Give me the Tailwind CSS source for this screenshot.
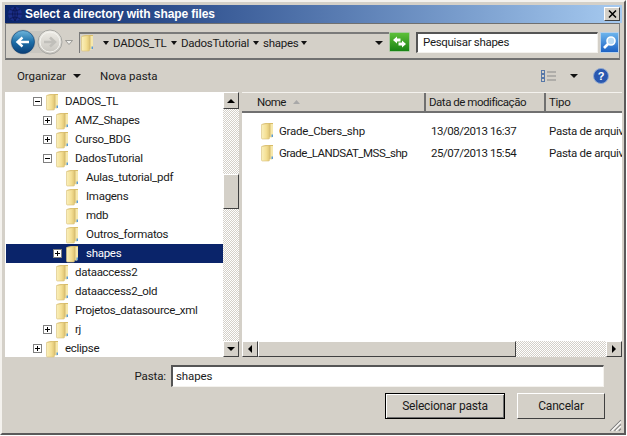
<!DOCTYPE html>
<html>
<head>
<meta charset="utf-8">
<script src="https://cdn.jsdelivr.net/npm/@tailwindcss/browser@4"></script>
</head>
<body class="m-0 bg-white">
<svg width="0" height="0" class="absolute">
  <defs>
    <linearGradient id="fg" x1="0" x2="1" y1="0" y2="0"><stop offset="0" stop-color="#faf0bc"/><stop offset="0.6" stop-color="#f4df94"/><stop offset="1" stop-color="#e0c674"/></linearGradient>
    <symbol id="folder" viewBox="0 0 13 18">
      <path d="M1 2 L5 1 L12 1 L12 15 L6 15 Z" fill="#d8bc68"/>
      <path d="M0.5 2.5 L7 1.5 Q8.5 1.5 8.5 3 L8.5 16 Q8.5 17 7.5 17 L1.5 17 Q0.5 17 0.5 16 Z" fill="url(#fg)" stroke="#d8c078" stroke-width="0.6"/>
      <path d="M9.5 2 L12 2 L12 15 L9.5 16 Z" fill="#f6e8ac"/>
      <rect x="10.5" y="12.5" width="1.5" height="2.5" fill="#5b9bd5"/>
    </symbol>
  </defs>
</svg>
<div class="w-[626px] h-[435px] overflow-hidden flex flex-col bg-[#d4d0c8] border-2 border-[#f4f2ee] border-r-[#5a5a5a] border-b-[#5a5a5a] pt-[3px] pl-[3px] pr-[2px] text-[11.5px] tracking-[-0.28px] leading-[19px] text-[#1a1a1a] font-['Roboto','Noto_Sans',sans-serif]">

  <!-- Title bar -->
  <div class="h-[18px] shrink-0 flex items-center bg-gradient-to-r from-[#0a246a] to-[#a6caf0] pl-[2px] pr-[2px]">
    <svg width="16" height="16" viewBox="0 0 16 16" class="shrink-0">
      <circle cx="8" cy="8" r="7" fill="#1c2f8a"/>
      <path d="M1 8h14M8 1v14M3 3.5q5 3 10 0M3 12.5q5-3 10 0M8 1q-5 7 0 14M8 1q5 7 0 14" stroke="#0a1550" stroke-width="0.8" fill="none"/>
    </svg>
    <span class="ml-[2px] text-white font-bold text-[12px] tracking-[-0.08px] leading-[18px] font-['Liberation_Sans',sans-serif]">Select a directory with shape files</span>
    <div class="ml-auto w-[16px] h-[14px] bg-[#d4d0c8] border border-[#fff] border-r-[#404040] border-b-[#404040] flex items-center justify-center">
      <svg width="9" height="8" viewBox="0 0 9 8"><path d="M1 0.5L8 7.5M8 0.5L1 7.5" stroke="#000" stroke-width="1.5"/></svg>
    </div>
  </div>

  <!-- Navigation bar -->
  <div class="h-[37px] w-[615px] shrink-0 flex items-center pl-[4px] pt-[2px] border border-[#808080] border-t-[#707070] border-b-2 border-b-[#707070]">
    <svg width="65" height="28" viewBox="0 0 65 28" class="shrink-0">
      <defs>
        <linearGradient id="bk" x1="0" x2="0" y1="0" y2="1"><stop offset="0" stop-color="#6fb6dc"/><stop offset="0.5" stop-color="#1c6ea8"/><stop offset="1" stop-color="#0a3f78"/></linearGradient>
        <linearGradient id="fw" x1="0" x2="0" y1="0" y2="1"><stop offset="0" stop-color="#f0eee8"/><stop offset="1" stop-color="#c4c2bc"/></linearGradient>
      </defs>
      <rect x="12" y="3" width="28" height="22" fill="#c8c6c0"/>
      <circle cx="40" cy="14" r="12" fill="url(#fw)" stroke="#a8a8a4"/>
      <circle cx="40" cy="14" r="10" fill="none" stroke="#f4f4f0"/>
      <path d="M34 14h10M40 9.5l5 4.5-5 4.5" stroke="#c0bfba" stroke-width="2.5" fill="none"/>
      <circle cx="13" cy="14" r="12.5" fill="#bcbab4"/>
      <circle cx="13" cy="14" r="11.5" fill="url(#bk)" stroke="#0d3c6e" stroke-width="0.6"/>
      <path d="M19 14H8.5M12.5 9.5L7.5 14l5 4.5" stroke="#fff" stroke-width="2.4" fill="none"/>
      <path d="M55.5 12.5h7l-3.5 4z" fill="#efefec" stroke="#8a8a86" stroke-width="0.8"/>
    </svg>
    <!-- address -->
    <div class="ml-[4px] w-[310px] h-[21px] shrink-0 flex items-center border-t-2 border-l border-[#7a7a7a] pl-[1px] whitespace-nowrap tracking-[-0.25px]">
      <svg width="13" height="18" class="shrink-0"><use href="#folder"/></svg>
      <span class="ml-[9px] w-0 h-0 border-x-[3.5px] border-x-transparent border-t-[4px] border-t-[#111] shrink-0"></span>
      <span class="ml-[4px] w-[52px] shrink-0">DADOS_TL</span>
      <span class="ml-[6px] w-0 h-0 border-x-[3.5px] border-x-transparent border-t-[4px] border-t-[#111] shrink-0"></span>
      <span class="ml-[4px] w-[67px] shrink-0">DadosTutorial</span>
      <span class="ml-[5px] w-0 h-0 border-x-[3.5px] border-x-transparent border-t-[4px] border-t-[#111] shrink-0"></span>
      <span class="ml-[4px] w-[36px] shrink-0">shapes</span>
      <span class="ml-[2px] w-0 h-0 border-x-[3.5px] border-x-transparent border-t-[4px] border-t-[#111] shrink-0"></span>
      <span class="ml-auto mr-[6px] w-0 h-0 border-x-[4px] border-x-transparent border-t-[4px] border-t-[#111] shrink-0"></span>
    </div>
    <!-- refresh -->
    <div class="w-[21px] h-[20px] shrink-0 bg-gradient-to-b from-[#5cc038] to-[#178414] border border-[#a8c8a0] rounded-[1px] flex items-center justify-center">
      <svg width="15" height="14" viewBox="0 0 15 14"><path d="M1 5L5 1.5V3.5H8.5V6.5H5V8.5zM14 9L10 12.5V10.5H6.5V7.5H10V5.5z" fill="#fff"/></svg>
    </div>
    <!-- search -->
    <div class="ml-[6px] w-[182px] h-[21px] shrink-0 bg-white border-t-2 border-l-2 border-[#555] border-r border-b border-r-[#f4f2ee] border-b-[#f4f2ee] flex items-center pl-[5px] tracking-[-0.3px]">Pesquisar shapes</div>
    <div class="ml-[2px] w-[19px] h-[21px] shrink-0 bg-gradient-to-b from-[#6cb4ec] to-[#1c62c4] border border-[#b8d0e8] flex items-center justify-center">
      <svg width="15" height="15" viewBox="0 0 15 15"><circle cx="9" cy="6" r="4" fill="#bcdcf4" stroke="#fff" stroke-width="1.6"/><path d="M6 9L2 13" stroke="#fff" stroke-width="2.6"/></svg>
    </div>
  </div>

  <!-- Command bar -->
  <div class="h-[32px] shrink-0 flex items-center pl-[12px] pr-[13px] tracking-[-0.05px]">
    <span class="w-[56px] shrink-0">Organizar</span>
    <span class="w-0 h-0 border-x-[4px] border-x-transparent border-t-[4px] border-t-[#111]"></span>
    <span class="ml-[19px]">Nova pasta</span>
    <svg width="16" height="14" viewBox="0 0 16 14" class="ml-auto">
      <g fill="none" stroke="#5878a8"><rect x="0.5" y="1.5" width="3" height="3"/><rect x="0.5" y="5.5" width="3" height="3"/><rect x="0.5" y="9.5" width="3" height="3"/></g>
      <path d="M6 3h9M6 7h9M6 11h9" stroke="#8a8a8a"/>
    </svg>
    <span class="ml-[13px] w-0 h-0 border-x-[4px] border-x-transparent border-t-[4px] border-t-[#111]"></span>
    <svg width="16" height="16" viewBox="0 0 16 16" class="ml-[15px]">
      <circle cx="8" cy="8" r="7.5" fill="#2a58b0" stroke="#8fa8d0"/>
      <text x="8" y="12" font-size="11" font-weight="700" text-anchor="middle" fill="#fff" font-family="Liberation Sans">?</text>
    </svg>
  </div>

  <!-- Panes -->
  <div class="h-[265px] shrink-0 flex">
    <!-- Tree -->
    <div class="w-[218px] shrink-0 bg-white flex flex-col pl-[1px]">
      <div class="h-[19px] flex items-center pl-[27px]"><span class="w-[9px] h-[9px] border border-[#808080] bg-white flex items-center justify-center"><span class="w-[5px] h-px bg-black"></span></span><svg width="13" height="18" class="ml-[4px]"><use href="#folder"/></svg><span class="ml-[6px]">DADOS_TL</span></div>
      <div class="h-[19px] flex items-center pl-[37px]"><span class="w-[9px] h-[9px] border border-[#808080] bg-white relative flex items-center justify-center"><span class="w-[5px] h-px bg-black"></span><span class="absolute w-px h-[5px] bg-black"></span></span><svg width="13" height="18" class="ml-[4px]"><use href="#folder"/></svg><span class="ml-[6px]">AMZ_Shapes</span></div>
      <div class="h-[19px] flex items-center pl-[37px]"><span class="w-[9px] h-[9px] border border-[#808080] bg-white relative flex items-center justify-center"><span class="w-[5px] h-px bg-black"></span><span class="absolute w-px h-[5px] bg-black"></span></span><svg width="13" height="18" class="ml-[4px]"><use href="#folder"/></svg><span class="ml-[6px]">Curso_BDG</span></div>
      <div class="h-[19px] flex items-center pl-[37px]"><span class="w-[9px] h-[9px] border border-[#808080] bg-white flex items-center justify-center"><span class="w-[5px] h-px bg-black"></span></span><svg width="13" height="18" class="ml-[4px]"><use href="#folder"/></svg><span class="ml-[6px]">DadosTutorial</span></div>
      <div class="h-[19px] flex items-center pl-[60px]"><svg width="13" height="18"><use href="#folder"/></svg><span class="ml-[7px]">Aulas_tutorial_pdf</span></div>
      <div class="h-[19px] flex items-center pl-[60px]"><svg width="13" height="18"><use href="#folder"/></svg><span class="ml-[7px]">Imagens</span></div>
      <div class="h-[19px] flex items-center pl-[60px]"><svg width="13" height="18"><use href="#folder"/></svg><span class="ml-[7px]">mdb</span></div>
      <div class="h-[19px] flex items-center pl-[60px]"><svg width="13" height="18"><use href="#folder"/></svg><span class="ml-[7px]">Outros_formatos</span></div>
      <div class="h-[19px] flex items-center pl-[47px] bg-[#0a246a] text-white"><span class="w-[9px] h-[9px] border border-[#808080] bg-white relative flex items-center justify-center"><span class="w-[5px] h-px bg-black"></span><span class="absolute w-px h-[5px] bg-black"></span></span><svg width="13" height="18" class="ml-[4px]"><use href="#folder"/></svg><span class="ml-[7px]">shapes</span></div>
      <div class="h-[19px] flex items-center pl-[50px]"><svg width="13" height="18"><use href="#folder"/></svg><span class="ml-[6px]">dataaccess2</span></div>
      <div class="h-[19px] flex items-center pl-[50px]"><svg width="13" height="18"><use href="#folder"/></svg><span class="ml-[6px]">dataaccess2_old</span></div>
      <div class="h-[19px] flex items-center pl-[50px]"><svg width="13" height="18"><use href="#folder"/></svg><span class="ml-[6px]">Projetos_datasource_xml</span></div>
      <div class="h-[19px] flex items-center pl-[37px]"><span class="w-[9px] h-[9px] border border-[#808080] bg-white relative flex items-center justify-center"><span class="w-[5px] h-px bg-black"></span><span class="absolute w-px h-[5px] bg-black"></span></span><svg width="13" height="18" class="ml-[4px]"><use href="#folder"/></svg><span class="ml-[6px]">rj</span></div>
      <div class="h-[19px] flex items-center pl-[27px]"><span class="w-[9px] h-[9px] border border-[#808080] bg-white relative flex items-center justify-center"><span class="w-[5px] h-px bg-black"></span><span class="absolute w-px h-[5px] bg-black"></span></span><svg width="13" height="18" class="ml-[4px]"><use href="#folder"/></svg><span class="ml-[6px]">eclipse</span></div>
    </div>
    <!-- Tree scrollbar -->
    <div class="w-[16px] shrink-0 flex flex-col bg-[repeating-conic-gradient(#ffffff_0%_25%,#d4d0c8_0%_50%)] bg-[length:2px_2px]">
      <div class="h-[17px] shrink-0 bg-[#d4d0c8] border border-[#fff] border-r-[#404040] border-b-[#404040] flex items-center justify-center"><span class="w-0 h-0 border-x-[4px] border-x-transparent border-b-[4px] border-b-black"></span></div>
      <div class="h-[35px] shrink-0 mt-[65px] bg-[#d4d0c8] border border-[#fff] border-r-[#404040] border-b-[#404040]"></div>
      <div class="h-[16px] shrink-0 mt-auto bg-[#d4d0c8] border border-[#fff] border-r-[#404040] border-b-[#404040] flex items-center justify-center"><span class="w-0 h-0 border-x-[4px] border-x-transparent border-t-[4px] border-t-black"></span></div>
    </div>
    <!-- splitter -->
    <div class="w-[3px] shrink-0"></div>
    <!-- Right -->
    <div class="flex-1 min-w-0 bg-white flex flex-col">
      <div class="h-[21px] shrink-0 flex bg-[#d4d0c8] border-t border-t-[#f4f2ee] border-b-2 border-b-[#707070]">
        <div class="w-[184px] shrink-0 border-r-2 border-[#707070] pl-[15px] flex items-center"><span class="tracking-[-0.5px]">Nome</span><svg width="7" height="4" viewBox="0 0 7 4" class="ml-[7px]"><path d="M0 4L3.5 0L7 4z" fill="#a8a8a8"/></svg></div>
        <div class="w-[120px] shrink-0 border-r-2 border-[#707070] pl-[3px] flex items-center whitespace-nowrap tracking-[-0.47px]">Data de modificação</div>
        <div class="pl-[3px] flex items-center">Tipo</div>
      </div>
      <div class="flex-1 min-h-0 pt-[7px] overflow-hidden">
        <div class="h-[22px] flex items-center whitespace-nowrap"><svg width="13" height="18" class="ml-[19px] shrink-0"><use href="#folder"/></svg><span class="ml-[5px] w-[152px] shrink-0 tracking-[-0.23px]">Grade_Cbers_shp</span><span class="w-[118px] shrink-0 tracking-[-0.47px]">13/08/2013 16:37</span><span>Pasta de arquivos</span></div>
        <div class="h-[22px] flex items-center whitespace-nowrap"><svg width="13" height="18" class="ml-[19px] shrink-0"><use href="#folder"/></svg><span class="ml-[5px] w-[152px] shrink-0 tracking-[-0.48px]">Grade_LANDSAT_MSS_shp</span><span class="w-[118px] shrink-0 tracking-[-0.47px]">25/07/2013 15:54</span><span>Pasta de arquivos</span></div>
      </div>
      <div class="h-[16px] shrink-0 flex bg-[repeating-conic-gradient(#ffffff_0%_25%,#d4d0c8_0%_50%)] bg-[length:2px_2px]">
        <div class="w-[16px] shrink-0 bg-[#d4d0c8] border border-[#fff] border-r-[#404040] border-b-[#404040] flex items-center justify-center"><span class="w-0 h-0 border-y-[4px] border-y-transparent border-r-[4px] border-r-black"></span></div>
        <div class="w-[258px] shrink-0 bg-[#d4d0c8] border border-[#fff] border-r-[#404040] border-b-[#404040]"></div>
        <div class="w-[16px] shrink-0 ml-auto bg-[#d4d0c8] border border-[#fff] border-r-[#404040] border-b-[#404040] flex items-center justify-center"><span class="w-0 h-0 border-y-[4px] border-y-transparent border-l-[4px] border-l-black"></span></div>
      </div>
    </div>
  </div>

  <!-- Footer -->
  <div class="flex-1 min-h-0 relative flex flex-col">
    <div class="flex items-center mt-[8px] h-[22px] pr-[18px] justify-end tracking-[-0.1px]">
      <span class="mr-[5px]">Pasta:</span>
      <div class="w-[433px] h-[22px] bg-white border-t-2 border-l-2 border-[#555] border-r border-b border-r-[#f4f2ee] border-b-[#f4f2ee] pl-[3px] flex items-center">shapes</div>
    </div>
    <div class="flex justify-end mt-[6px] pr-[17px] gap-[12px] text-[12px] tracking-[-0.2px]">
      <div class="w-[120px] h-[26px] bg-[#d4d0c8] border border-black shadow-[inset_1px_1px_0_#fff,inset_-1px_-1px_0_#707070] flex items-center justify-center">Selecionar pasta</div>
      <div class="w-[88px] h-[26px] bg-[#d4d0c8] border border-[#fff] border-r-[#404040] border-b-[#404040] flex items-center justify-center">Cancelar</div>
    </div>
    <svg width="13" height="13" viewBox="0 0 12 12" class="absolute right-0 bottom-[1px]"><path d="M11 1L1 11M11 5L5 11M11 9L9 11" stroke="#808080"/><path d="M11 2.5L2.5 11M11 6.5L6.5 11" stroke="#fff"/></svg>
  </div>
</div>
</body>
</html>
